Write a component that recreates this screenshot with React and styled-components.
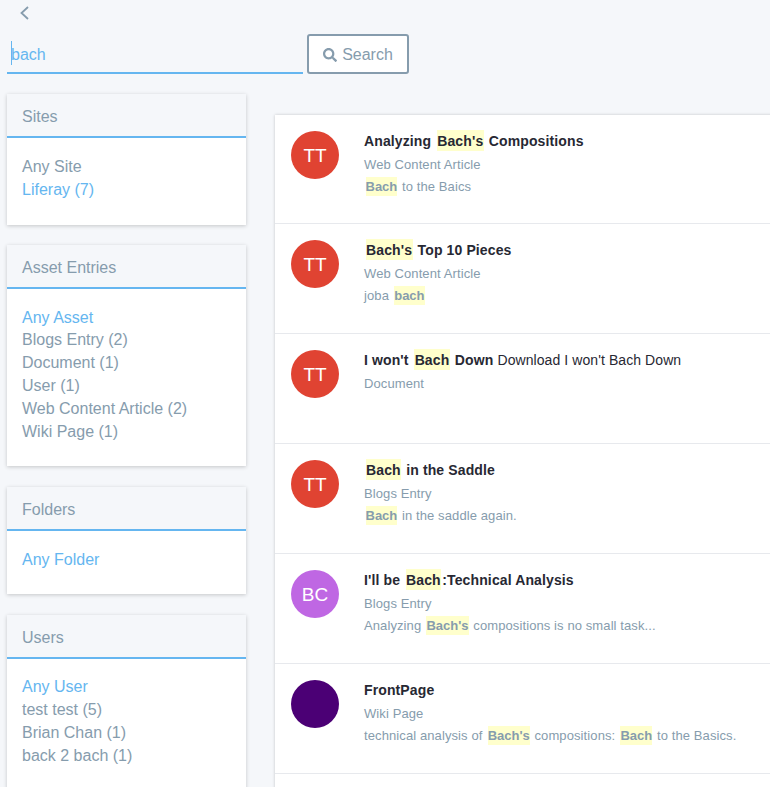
import styled, { createGlobalStyle } from 'styled-components';
import { FaSearch } from 'react-icons/fa';

const GlobalStyle = createGlobalStyle`
  html, body {
    margin: 0;
    height: 787px;
    overflow: hidden;
    background: #f5f7fa;
  }
  body {
    font-family: "Liberation Sans", Arial, sans-serif;
    color: #869cad;
  }
`;

const Page = styled.div`
  padding: 0 0 0 7px;
`;

const BackRow = styled.div`
  height: 34px;
  padding: 5px 0 0 12px;
  box-sizing: border-box;
  color: #869cad;
`;

const SearchRow = styled.div`
  display: flex;
  gap: 4px;
  height: 40px;
`;

const SearchField = styled.div`
  width: 296px;
  height: 40px;
  box-sizing: border-box;
  border-bottom: 2px solid #65b6f0;
  padding: 9px 0 0 4px;
  font-size: 16px;
  line-height: 24px;
  color: #65b6f0;
  position: relative;
`;

const Caret = styled.span`
  position: absolute;
  left: 4px;
  top: 7px;
  width: 1px;
  height: 24px;
  background: #65b6f0;
`;

const SearchButton = styled.button`
  width: 102px;
  height: 40px;
  box-sizing: border-box;
  background: #fff;
  border: 2px solid #869cad;
  border-radius: 3px;
  color: #869cad;
  font-family: inherit;
  font-size: 16px;
  display: flex;
  align-items: center;
  justify-content: center;
  gap: 5px;
  padding: 2px 0 0;
`;

const Columns = styled.div`
  display: flex;
  align-items: flex-start;
  margin-top: 20px;
`;

const Sidebar = styled.aside`
  width: 239px;
  flex: none;
  display: flex;
  flex-direction: column;
  gap: 20.2px;
  padding-top: 0.1px;
`;

const FacetCard = styled.section`
  background: #fff;
  box-shadow: 0 1px 4px rgba(0, 0, 0, 0.2);
  padding-bottom: 23px;
`;

const FacetHeader = styled.h3`
  margin: 0;
  height: 44.4px;
  box-sizing: border-box;
  background: #f5f7fa;
  border-bottom: 2px solid #65b6f0;
  padding: 12px 15px 0;
  font-size: 16px;
  line-height: 22px;
  font-weight: 400;
  color: #869cad;
`;

const FacetList = styled.ul`
  list-style: none;
  margin: 0;
  padding: 17.5px 15px 0;
`;

const FacetItem = styled.li`
  font-size: 16px;
  line-height: 22.8px;
  color: ${(p) => (p.$active ? '#65b6f0' : '#869cad')};
`;

const Results = styled.main`
  margin: 21px 0 0 29px;
  width: 520px;
  height: 700px;
  flex: none;
  background: #fff;
  box-shadow: 0 0 3px rgba(0, 0, 0, 0.2);
`;

const ResultRow = styled.article`
  height: ${(p) => p.$height}px;
  box-sizing: border-box;
  border-bottom: 1px solid #e7e9ed;
  padding: 16px 0 0 16px;
  display: flex;
`;

const Avatar = styled.div`
  width: 48px;
  height: 48px;
  box-sizing: border-box;
  padding-top: 2px;
  flex: none;
  border-radius: 50%;
  background: ${(p) => p.$color};
  color: #fff;
  font-size: 19px;
  display: flex;
  align-items: center;
  justify-content: center;
`;

const ResultBody = styled.div`
  margin-left: 25px;
`;

const Title = styled.div`
  font-size: 14px;
  line-height: 21px;
  letter-spacing: 0.12px;
  font-weight: 700;
  color: #272833;
  white-space: nowrap;
`;

const PlainTitle = styled.span`
  font-weight: 400;
  letter-spacing: 0.08px;
`;

const Meta = styled.div`
  font-size: 13px;
  line-height: 22px;
  letter-spacing: 0.1px;
  color: #869cad;
  white-space: nowrap;
  position: relative;
  top: 2px;
`;

const Mark = styled.mark`
  background: #ffffcc;
  color: inherit;
  padding: 3px 0.5px 2px;
  margin: 0 1px 0 1.5px;
`;

const Strong = styled(Mark)`
  font-weight: 700;
  letter-spacing: 0;
  padding: 2px 0;
`;

const facets = [
  { title: 'Sites', items: [['Any Site'], ['Liferay (7)', true]] },
  {
    title: 'Asset Entries',
    items: [
      ['Any Asset', true],
      ['Blogs Entry (2)'],
      ['Document (1)'],
      ['User (1)'],
      ['Web Content Article (2)'],
      ['Wiki Page (1)'],
    ],
  },
  { title: 'Folders', items: [['Any Folder', true]] },
  {
    title: 'Users',
    items: [['Any User', true], ['test test (5)'], ['Brian Chan (1)'], ['back 2 bach (1)']],
  },
];

const App = () => (
  <>
    <GlobalStyle />
    <Page>
      <BackRow>
        <svg width="10" height="16" viewBox="0 0 10 16" fill="none" stroke="currentColor" strokeWidth="1.8">
          <path d="M9 2 L2.5 8 L9 14" />
        </svg>
      </BackRow>
      <SearchRow>
        <SearchField>
          <Caret />
          bach
        </SearchField>
        <SearchButton>
          <FaSearch size={14} />
          Search
        </SearchButton>
      </SearchRow>
      <Columns>
        <Sidebar>
          {facets.map((f) => (
            <FacetCard key={f.title}>
              <FacetHeader>{f.title}</FacetHeader>
              <FacetList>
                {f.items.map(([label, active]) => (
                  <FacetItem key={label} $active={active}>
                    {label}
                  </FacetItem>
                ))}
              </FacetList>
            </FacetCard>
          ))}
        </Sidebar>
        <Results>
          <ResultRow $height={109}>
            <Avatar $color="#e04332">TT</Avatar>
            <ResultBody>
              <Title>
                Analyzing <Mark>Bach's</Mark> Compositions
              </Title>
              <Meta>Web Content Article</Meta>
              <Meta>
                <Strong>Bach</Strong> to the Baics
              </Meta>
            </ResultBody>
          </ResultRow>
          <ResultRow $height={110}>
            <Avatar $color="#e04332">TT</Avatar>
            <ResultBody>
              <Title>
                <Mark>Bach's</Mark> Top 10 Pieces
              </Title>
              <Meta>Web Content Article</Meta>
              <Meta>
                joba <Strong>bach</Strong>
              </Meta>
            </ResultBody>
          </ResultRow>
          <ResultRow $height={110}>
            <Avatar $color="#e04332">TT</Avatar>
            <ResultBody>
              <Title>
                I won't <Mark>Bach</Mark> Down <PlainTitle>Download I won't Bach Down</PlainTitle>
              </Title>
              <Meta>Document</Meta>
            </ResultBody>
          </ResultRow>
          <ResultRow $height={110}>
            <Avatar $color="#e04332">TT</Avatar>
            <ResultBody>
              <Title>
                <Mark>Bach</Mark> in the Saddle
              </Title>
              <Meta>Blogs Entry</Meta>
              <Meta>
                <Strong>Bach</Strong> in the saddle again.
              </Meta>
            </ResultBody>
          </ResultRow>
          <ResultRow $height={110}>
            <Avatar $color="#bf67e3">BC</Avatar>
            <ResultBody>
              <Title>
                I'll be <Mark>Bach</Mark>:Technical Analysis
              </Title>
              <Meta>Blogs Entry</Meta>
              <Meta>
                Analyzing <Strong>Bach's</Strong> compositions is no small task...
              </Meta>
            </ResultBody>
          </ResultRow>
          <ResultRow $height={110}>
            <Avatar $color="#4b0075" />
            <ResultBody>
              <Title>FrontPage</Title>
              <Meta>Wiki Page</Meta>
              <Meta>
                technical analysis of <Strong>Bach's</Strong> compositions: <Strong>Bach</Strong> to the Basics.
              </Meta>
            </ResultBody>
          </ResultRow>
        </Results>
      </Columns>
    </Page>
  </>
);

export default App;
